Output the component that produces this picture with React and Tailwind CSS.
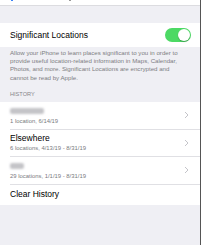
const font = { fontFamily: '"Liberation Sans", Arial, sans-serif' }

function Chevron() {
  return (
    <svg width="5" height="8" viewBox="0 0 5 8" className="shrink-0">
      <polyline points="1,1 4,4 1,7" fill="none" stroke="#c4c4c9" strokeWidth="1" />
    </svg>
  )
}

function HistoryRow({ name, blur, detail, last }) {
  return (
    <div className="flex items-center pl-[10px]">
      <div className={`flex flex-1 items-center pr-[11px] ${last ? '' : 'border-b border-[#e0e0e4]'} h-[27.5px]`}>
        <div className="flex flex-1 flex-col">
          {blur ? (
            <div className="h-[10px] flex items-center">
              <div className={`h-[6px] rounded-[2px] bg-[#c4c4c8] blur-[1.2px] ${blur}`} />
            </div>
          ) : (
            <div className="h-[10px] text-[8.5px] leading-[10px] text-black">{name}</div>
          )}
          <div className="mt-[1px] text-[5.9px] leading-[8px] text-[#7a7a80]">{detail}</div>
        </div>
        <Chevron />
      </div>
    </div>
  )
}

export default function App() {
  return (
    <div style={font} className="relative h-[245px] w-[201px] overflow-hidden border-r border-[#555] bg-[#efeff4]">
      <div className="relative h-[6px] border-b border-[#dcdce0] bg-white">
        <div className="absolute left-[11px] top-0 h-[1px] w-[2px] bg-[#3b82f6]" />
        <div className="absolute left-[69px] top-0 h-[1px] w-[2px] bg-[#999]" />
      </div>

      <div className="mt-[17px] flex h-[24px] items-center justify-between bg-white pl-[10px] pr-[9px]">
        <span className="text-[8.5px] text-black">Significant Locations</span>
        <div className="flex h-[14px] w-[26px] items-center justify-end rounded-full bg-[#4cd964] p-[1px]">
          <div className="h-[12px] w-[12px] rounded-full bg-white shadow-[0_1px_1px_rgba(0,0,0,0.25)]" />
        </div>
      </div>

      <p className="pl-[10px] pr-[12px] pt-[2px] text-[6.15px] leading-[8.2px] text-[#7d7d82]">
        Allow your iPhone to learn places significant to you in order to provide useful location-related information in Maps, Calendar, Photos, and more. Significant Locations are encrypted and cannot be read by Apple.
      </p>

      <div className="mt-[8px] px-[10px] pb-[4px] text-[5.6px] uppercase text-[#85858a]">History</div>

      <div className="bg-white">
        <HistoryRow blur="w-[34px]" detail="1 location, 6/14/19" />
        <HistoryRow name="Elsewhere" detail="6 locations, 4/13/19 - 8/31/19" />
        <HistoryRow blur="w-[14px]" detail="29 locations, 1/1/19 - 8/31/19" />
        <div className="flex h-[20px] items-center pl-[10px] text-[8.5px] text-black">Clear History</div>
      </div>
    </div>
  )
}
